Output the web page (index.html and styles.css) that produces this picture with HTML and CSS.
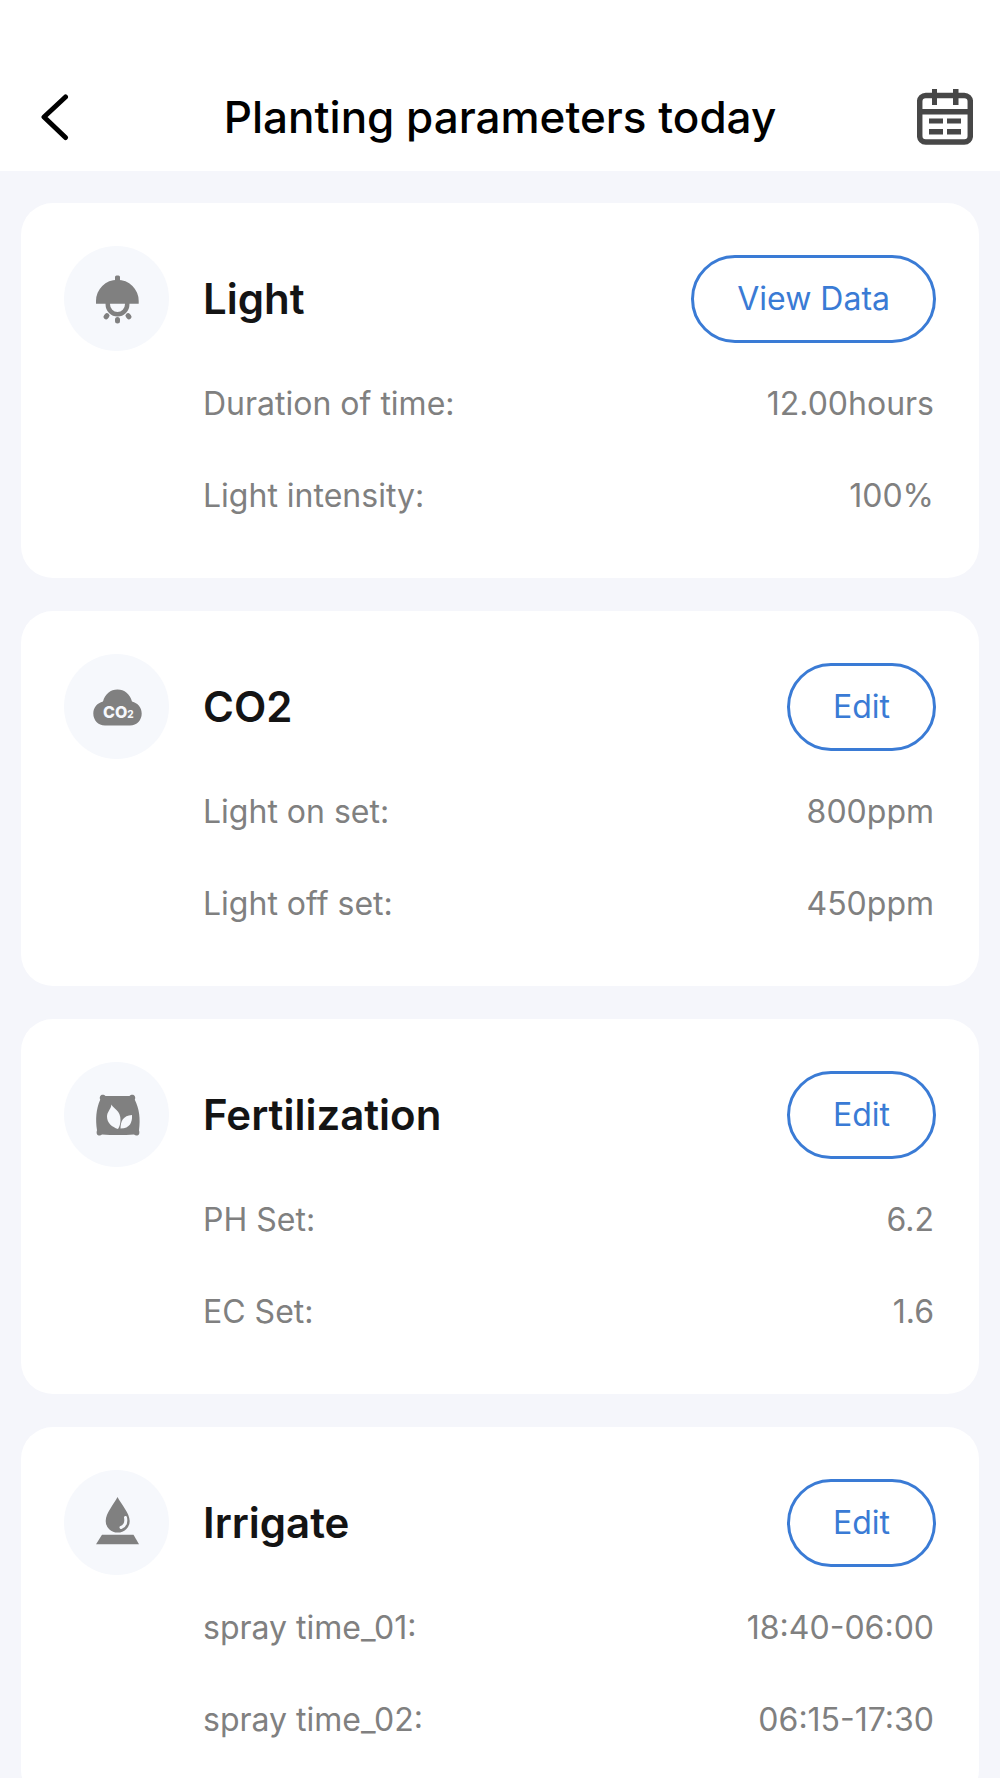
FILE: index.html
```html
<!DOCTYPE html>
<html lang="en">
<head>
  <meta charset="utf-8">
  <meta name="viewport" content="width=device-width, initial-scale=1">
  <title>Planting parameters today</title>
  <link rel="stylesheet" href="styles.css">
</head>
<body>
  <header class="topbar">
    <button class="icon-btn back" type="button" aria-label="Back">
      <svg width="32" height="48" viewBox="0 0 32 48" fill="none" stroke="#000" stroke-width="5" stroke-linecap="round" stroke-linejoin="round">
        <path d="M25.5 4 L4 24 L25.5 44.5"/>
      </svg>
    </button>
    <h1>Planting parameters today</h1>
    <button class="icon-btn calendar" type="button" aria-label="Calendar">
      <svg width="56" height="56" viewBox="0 0 56 56" fill="#474747">
        <rect x="2.7" y="6.5" width="50.6" height="46.5" rx="6" fill="none" stroke="#474747" stroke-width="5.5"/>
        <path d="M3 20h50v5.5H3zM15 0h5v16h-5zM36 0h5.5v16H36zM12 29.5h14v5H12zM30 29.5h14v5H30zM12 40h14v5.5H12zM30 40h14v5.5H30z"/>
      </svg>
    </button>
  </header>

  <main class="cards">
    <section class="card">
      <div class="card-head">
        <span class="badge">
          <svg viewBox="-2 -2 52 52" fill="#808080">
            <rect x="22" y="0.5" width="5" height="8" rx="1.5"/>
            <path d="M3 28.7V26a21.3 21.3 0 0 1 42.7 0v2.7z"/>
            <path d="M14.8 28v1.5a9.7 9.7 0 0 0 19.4 0V28" fill="none" stroke="#808080" stroke-width="4.5"/>
            <g stroke="#808080" stroke-width="5" stroke-linecap="round">
              <path d="M14 40.6l-1 1.2M24.5 44.5v1.5M35 40.6l1 1.2"/>
            </g>
          </svg>
        </span>
        <h2>Light</h2>
        <button class="pill" type="button">View Data</button>
      </div>
      <dl>
        <div><dt>Duration of time:</dt><dd>12.00hours</dd></div>
        <div><dt>Light intensity:</dt><dd>100%</dd></div>
      </dl>
    </section>

    <section class="card">
      <div class="card-head">
        <span class="badge">
          <svg viewBox="-2 -2 52 52" fill="#808080">
            <path d="M12 42.5C5 42.5 0.3 37 0.3 30.5c0-6 4-10.5 9.7-12C12 11 17.5 6.5 24.5 6.5S37 11 39 18.5c5.7 1.5 9.7 6 9.7 12 0 6.5-4.7 12-11.7 12z"/>
            <text class="co2" x="10" y="35">CO<tspan class="co2-sub">2</tspan></text>
          </svg>
        </span>
        <h2>CO2</h2>
        <button class="pill" type="button">Edit</button>
      </div>
      <dl>
        <div><dt>Light on set:</dt><dd>800ppm</dd></div>
        <div><dt>Light off set:</dt><dd>450ppm</dd></div>
      </dl>
    </section>

    <section class="card">
      <div class="card-head">
        <span class="badge">
          <svg viewBox="-2 -2 52 52" fill="#808080">
            <path d="M8 4.200C9.500 3.400 11.500 3.800 12.500 5h24C37.500 3.800 39.500 3.400 41 4.200c1.500 1.200 1.500 3 0.800 4.500 4.500 9 5.800 19 4.200 30.500 0.700 2 0.500 4.300-1 5-1.500 0.500-3 0.200-4-0.700-10 0.700-22 0.700-32 0-1 0.900-2.500 1.200-4 0.700-1.500-0.700-1.700-3-1-5C2.400 28.500 3 18 7.200 8.700 6.500 7.200 6.500 5.400 8 4.200z"/>
            <path d="M18.5 13.5c1.500 4 9.500 6 9 16-0.200 3.500-1 6.500-2.500 8.500-6-2-11-6-11-12.500 0-4.500 4-7.500 4.500-12z" fill="#f6f8fc"/>
            <path d="M39 24c0.500 7-2 13.500-11.500 13.500 0-7 2.500-13 11.500-13.500z" fill="#f6f8fc"/>
          </svg>
        </span>
        <h2>Fertilization</h2>
        <button class="pill" type="button">Edit</button>
      </div>
      <dl>
        <div><dt>PH Set:</dt><dd>6.2</dd></div>
        <div><dt>EC Set:</dt><dd>1.6</dd></div>
      </dl>
    </section>

    <section class="card">
      <div class="card-head">
        <span class="badge">
          <svg viewBox="-2 -2 52 52" fill="#808080">
            <path d="M24.5-2C28 5 36.7 14 36.7 22a12 11.5 0 0 1-24 0C12.700 14 21 5 24.5-2z"/>
            <path d="M32.5 18.5c1 5-0.5 8.5-4.500 10" fill="none" stroke="#f6f8fc" stroke-width="3" stroke-linecap="round"/>
            <path d="M9 35.700h31.500l5.500 9.600H3z"/>
          </svg>
        </span>
        <h2>Irrigate</h2>
        <button class="pill" type="button">Edit</button>
      </div>
      <dl>
        <div><dt>spray time_01:</dt><dd>18:40-06:00</dd></div>
        <div><dt>spray time_02:</dt><dd>06:15-17:30</dd></div>
      </dl>
    </section>
  </main>
</body>
</html>
```

FILE: styles.css
```css
* {
  box-sizing: border-box;
}
body {
  margin: 0;
  background: #f5f6fb;
  font-family: Inter, "Liberation Sans", sans-serif;
  font-size: 32px;
  color: #808080;
}
h1, h2, dl, dd {
  margin: 0;
}
button {
  font: inherit;
  background: none;
  cursor: pointer;
}
.topbar {
  display: grid;
  grid-template-columns: 1fr auto 1fr;
  align-items: center;
  min-height: 171px;
  padding: 62px 27px 0;
  background: #fff;
}
.topbar h1 {
  font-size: 44px;
  font-weight: 500;
  color: #000;
}
.icon-btn {
  padding: 0;
  border: none;
  line-height: 0;
}
.back {
  justify-self: start;
  padding: 0 13px;
}
.calendar {
  justify-self: end;
}
.cards {
  display: flex;
  flex-direction: column;
  gap: 33px;
  padding: 32px 21px;
}
.card {
  padding: 43px 43px 37px;
  background: #fff;
  border-radius: 32px;
}
.card-head {
  display: flex;
  align-items: center;
  gap: 34px;
}
.card-head h2 {
  flex: 1;
  font-size: 42px;
  font-weight: 600;
  color: #141414;
}
.badge {
  display: flex;
  align-items: center;
  justify-content: center;
  width: 105px;
  height: 105px;
  border-radius: 50%;
  background: #f6f8fc;
}
.badge svg {
  width: 52px;
  height: 52px;
}
.co2 {
  font-size: 16px;
  font-weight: 800;
  fill: #f6f8fc;
}
.co2-sub {
  font-size: 10px;
}
.pill {
  height: 88px;
  padding: 0 43px;
  border: 3px solid #3a7bd5;
  border-radius: 44px;
  color: #3a7bd5;
}
.pill:active {
  background: #eaf1fc;
}
dl {
  margin: 6px 2px 0 139px;
}
dl div {
  display: flex;
  align-items: center;
  justify-content: space-between;
  height: 92px;
}
```
